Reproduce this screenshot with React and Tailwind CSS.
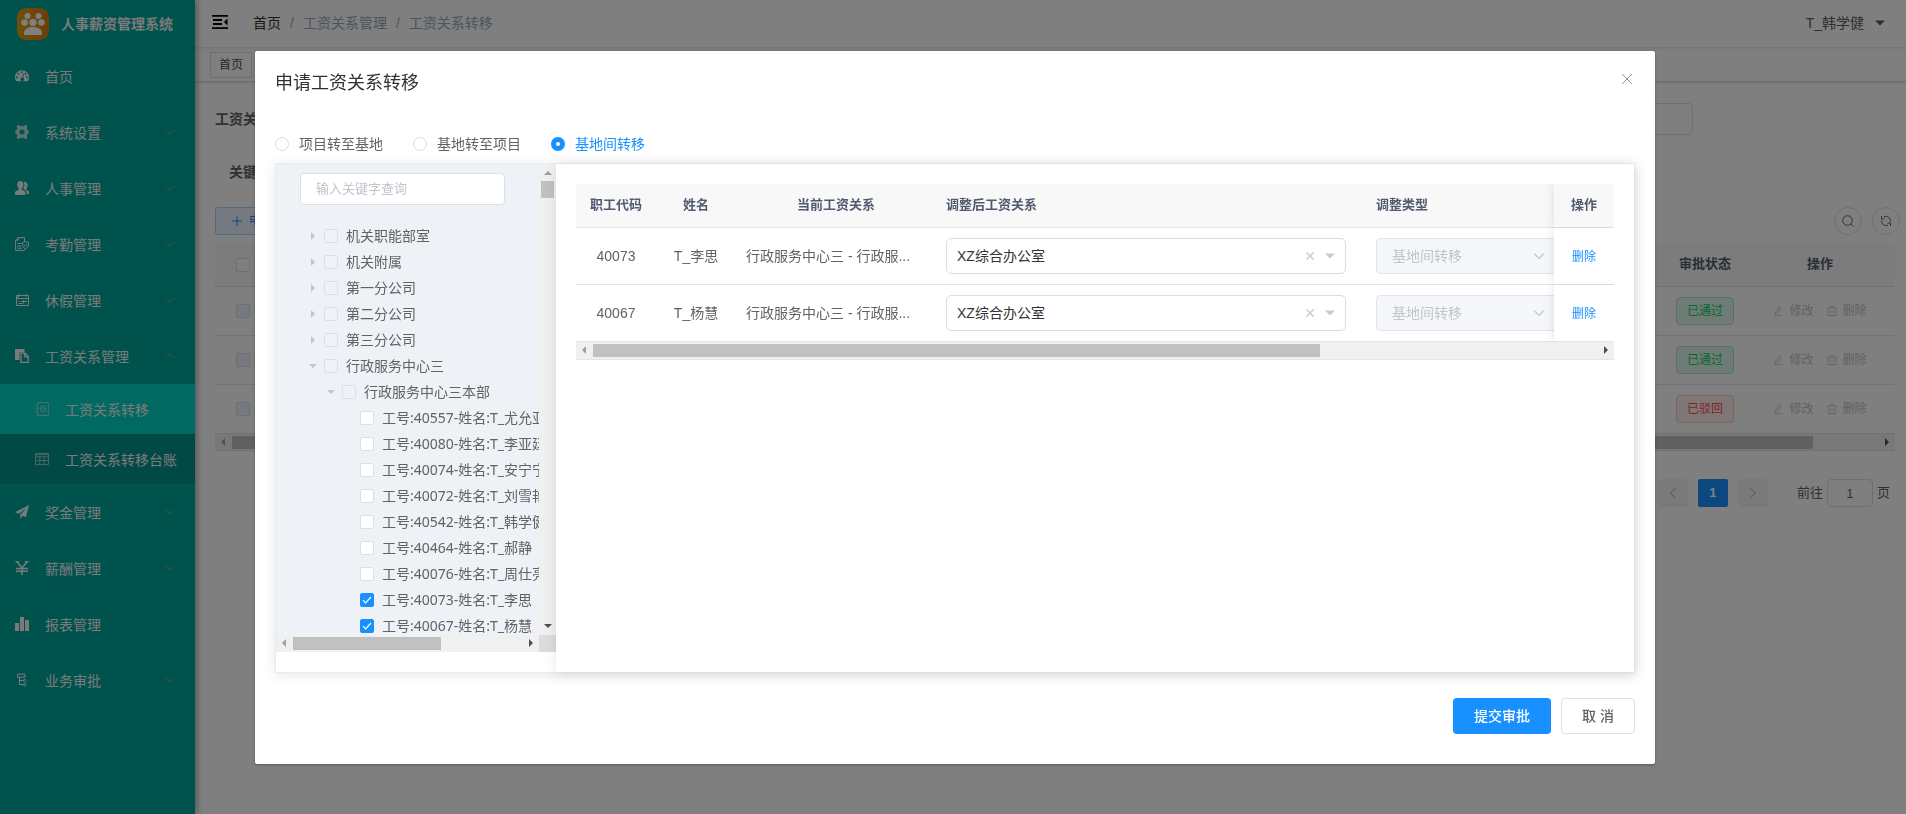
import { useState } from "react";

const MENU = [
  { label: "首页", icon: "dashboard" },
  { label: "系统设置", icon: "gear", arrow: "down" },
  { label: "人事管理", icon: "peoples", arrow: "down" },
  { label: "考勤管理", icon: "attendance", arrow: "down" },
  { label: "休假管理", icon: "calendar", arrow: "down" },
  {
    label: "工资关系管理",
    icon: "paste",
    arrow: "up",
    children: [
      { label: "工资关系转移", icon: "transfer", active: true },
      { label: "工资关系转移台账", icon: "grid" },
    ],
  },
  { label: "奖金管理", icon: "plane", arrow: "down" },
  { label: "薪酬管理", icon: "yen", arrow: "down" },
  { label: "报表管理", icon: "bars" },
  { label: "业务审批", icon: "flow", arrow: "down" },
];

const TREE = [
  { label: "机关职能部室", level: 0, open: false },
  { label: "机关附属", level: 0, open: false },
  { label: "第一分公司", level: 0, open: false },
  { label: "第二分公司", level: 0, open: false },
  { label: "第三分公司", level: 0, open: false },
  { label: "行政服务中心三", level: 0, open: true },
  { label: "行政服务中心三本部", level: 1, open: true },
  { label: "工号:40557-姓名:T_尤允亚", level: 2 },
  { label: "工号:40080-姓名:T_李亚廷", level: 2 },
  { label: "工号:40074-姓名:T_安宁宁", level: 2 },
  { label: "工号:40072-姓名:T_刘雪艳", level: 2 },
  { label: "工号:40542-姓名:T_韩学健", level: 2 },
  { label: "工号:40464-姓名:T_郝静", level: 2 },
  { label: "工号:40076-姓名:T_周仕亮", level: 2 },
  { label: "工号:40073-姓名:T_李思", level: 2, checked: true },
  { label: "工号:40067-姓名:T_杨慧", level: 2, checked: true },
];

const INDENT = ["pl-[30px]", "pl-[48px]", "pl-[66px]"];

const ROWS = [
  { code: "40073", name: "T_李思" },
  { code: "40067", name: "T_杨慧" },
];

const TYPES = ["项目转至基地", "基地转至项目", "基地间转移"];

function Svg({ className = "w-3.5 h-3.5", box = 14, children }) {
  return (
    <svg viewBox={`0 0 ${box} ${box}`} className={`shrink-0 ${className}`} fill="none" stroke="currentColor" aria-hidden="true">
      {children}
    </svg>
  );
}

function MenuIcon({ name }) {
  switch (name) {
    case "dashboard":
      return (
        <Svg>
          <path stroke="none" fill="currentColor" fillRule="evenodd" d="M7 1.2a7 7 0 0 0-7 7c0 1.5.4 2.8 1.1 4h11.800c.7-1.200 1.100-2.500 1.100-4a7 7 0 0 0-7-7zM7 2.200a1 1 0 1 1 0 2 1 1 0 0 1 0-2zM3.500 3.700a1 1 0 1 1 0 2 1 1 0 0 1 0-2zM10.600 3.700a1 1 0 1 1 0 2 1 1 0 0 1 0-2zM2 7.200a1 1 0 1 1 0 2 1 1 0 0 1 0-2zM12 7.200a1 1 0 1 1 0 2 1 1 0 0 1 0-2zM8.200 4.900l.8.200-.9 3.600a1.800 1.800 0 1 1-.8-.2z" />
        </Svg>
      );
    case "gear":
      return (
        <Svg className="w-3.5 h-3.5 opacity-75">
          <circle cx="7" cy="7" r="4.200" strokeWidth="3.400" />
          <g stroke="none" fill="currentColor">
            <circle cx="3.700" cy="2.100" r="2" />
            <circle cx="10.300" cy="2.100" r="2" />
            <circle cx="1.900" cy="7" r="1.900" />
            <circle cx="12.100" cy="7" r="1.900" />
            <circle cx="3.700" cy="11.900" r="2" />
            <circle cx="10.300" cy="11.900" r="2" />
          </g>
        </Svg>
      );
    case "peoples":
      return (
        <Svg>
          <g stroke="none" fill="currentColor">
            <path d="M5.300 0C3.300 0 2.200 1.500 2.200 3.600c0 1.500.6 3 1.600 3.800v1L.9 9.900C.3 10.300 0 10.900 0 11.600V14h10.400v-2.400c0-.7-.3-1.300-.9-1.600L6.700 8.500v-1C7.800 6.700 8.400 5.200 8.400 3.700 8.400 1.500 7.200 0 5.300 0z" />
            <path d="M8.600.9c.5.800.8 1.800.8 2.900 0 1.700-.6 3-1.300 3.900l2.300 1.300c.7.500 1.100 1.300 1.100 2.200V13H14v-1.700c0-.7-.4-1.200-.9-1.500l-1.600-1.200V7.500c.7-.7 1.100-1.800 1.100-2.900C12.600 2.300 11.200.6 8.600.9z" />
          </g>
        </Svg>
      );
    case "attendance":
      return (
        <Svg>
          <path d="M9.500 4.500V.6H3.200L.6 3.200v10.200h8.900v-1M3.200.6v2.600H.6M2.500 6.500h4M2.500 9h3.500M2.500 11.200h4.500" />
          <path d="M10.600 4.600l3 1v2.600c0 1.700-1.400 2.900-3 3.500-1.600-.6-3-1.800-3-3.500V5.600zM9.200 8l1.100 1.200 1.900-2.200" />
        </Svg>
      );
    case "calendar":
      return (
        <Svg>
          <path d="M1.500 2.500h12v10h-12zM1.500 5.500h12M4 .8v3M11 .8v3M6 8.500h6M3.500 8.500h1M3.500 10.500h4M8.500 7v3.500M3 2.500v3" />
        </Svg>
      );
    case "paste":
      return (
        <Svg>
          <path stroke="none" fill="currentColor" d="M0 0h9.500v3.200H4.500V11H0z" />
          <path d="M5.900 4.200h4.100l3.300 3.300v5.800H5.900zM9.600 4.200v3.700h3.700" strokeWidth="1.300" />
        </Svg>
      );
    case "transfer":
      return (
        <Svg>
          <path d="M2.500 3V.6h10.800v12.800H2.500V11M2.500 5v1.500M2.500 8v1M.5 4h3M.5 7h3M.5 10h3" />
          <circle cx="8" cy="7" r="2.800" />
          <path d="M8 5.500v1.700h1.500" />
        </Svg>
      );
    case "grid":
      return (
        <Svg>
          <path d="M.5 1.500h13v11H.5zM.5 4.800h13M.5 8.500h13M4.800 4.800v7.700M9.200 4.800v7.700" />
          <path d="M.5 2.700h13" />
        </Svg>
      );
    case "plane":
      return (
        <Svg>
          <path stroke="none" fill="currentColor" d="M14 0L0 7.300l3.900 1.500L11.600 3 5.300 9.700V14l2.200-3.200 3.400 1.400z" />
        </Svg>
      );
    case "yen":
      return (
        <Svg>
          <path strokeWidth="1.600" d="M.5.800h3.500M10 .800h3.500M2 .8L7 7 12 .8M7 6.500V14M1 7.500h12M1 10.200h12" />
        </Svg>
      );
    case "bars":
      return (
        <Svg>
          <path stroke="none" fill="currentColor" d="M0 6h4v8H0zM5 0h4v14H5zM10 3h4v11h-4z" />
        </Svg>
      );
    default:
      return (
        <Svg>
          <path d="M2.500 1.200h7.500v3H2.500zM4.500 4.200v7.300h4M4.500 7.500h4" />
          <circle cx="9.700" cy="7.500" r="1.200" />
          <circle cx="9.700" cy="11.700" r="1.200" />
        </Svg>
      );
  }
}

function Logo() {
  return (
    <svg viewBox="0 0 32 32" className="w-8 h-8 shrink-0" aria-hidden="true">
      <defs>
        <linearGradient id="logo" x1="0" x2="1" y1="0" y2="0">
          <stop offset="0" stopColor="#e0a010" />
          <stop offset="1" stopColor="#dd7a10" />
        </linearGradient>
      </defs>
      <rect width="32" height="32" rx="9" fill="url(#logo)" />
      <g fill="#fff">
        <circle cx="10.500" cy="8" r="3" />
        <circle cx="21.500" cy="8" r="3" />
        <circle cx="7.500" cy="14.500" r="3.200" />
        <circle cx="24.500" cy="14.500" r="3.200" />
        <circle cx="16" cy="14.500" r="4.200" stroke="#dd9010" />
        <path d="M7 26c0-5 3-7 9-7s9 2 9 7c0 .8-.5 1-1 1H8c-.5 0-1-.2-1-1z" />
      </g>
    </svg>
  );
}

function Chevron({ dir, className }) {
  const d = { down: "M1 3l4 4 4-4", up: "M1 7l4-4 4 4", left: "M7 1L3 5l4 4", right: "M3 1l4 4-4 4" }[dir];
  return (
    <Svg box={10} className={className}>
      <path d={d} />
    </Svg>
  );
}

function Triangle({ dir, className }) {
  const d = { up: "M0 6l4-4 4 4z", down: "M0 2l4 4 4-4z", left: "M6 0L2 4l4 4z", right: "M2 0l4 4-4 4z" }[dir];
  return (
    <svg viewBox="0 0 8 8" className={`w-2 h-2 shrink-0 fill-current ${className}`} aria-hidden="true">
      <path d={d} />
    </svg>
  );
}

function HScroll({ thumb, className = "" }) {
  return (
    <div className={`flex h-[17px] items-center bg-[#f0f0f0] ${className}`}>
      <Triangle dir="left" className="mr-[5px] ml-1 text-[#a0a0a0]" />
      <div className="flex-1">
        <div className={`h-[13px] bg-[#c1c1c1] ${thumb}`} />
      </div>
      <Triangle dir="right" className="mx-1 text-[#505050]" />
    </div>
  );
}

function Checkbox({ label, muted, checked = false }) {
  const [on, setOn] = useState(checked);
  return (
    <span className="grid shrink-0">
      <input
        type="checkbox"
        aria-label={label}
        checked={on}
        onChange={() => setOn(!on)}
        className={`peer col-start-1 row-start-1 h-3.5 w-3.5 appearance-none rounded-[2px] border border-[#dcdfe6] checked:border-[#1890ff] checked:bg-[#1890ff] ${muted ? "bg-[#edf2fc]" : "bg-white"}`}
      />
      <svg viewBox="0 0 14 14" className="pointer-events-none invisible col-start-1 row-start-1 h-3.5 w-3.5 peer-checked:visible" fill="none" stroke="#fff" aria-hidden="true">
        <path d="M3 7.200l2.600 2.600L11 4" strokeWidth="1.200" />
      </svg>
    </span>
  );
}

function Sidebar() {
  return (
    <aside className="z-10 w-[195px] shrink-0 bg-[#00a59b] text-[#f4f4f5] shadow-[2px_0_6px_rgba(0,21,41,0.35)]">
      <div className="flex h-12 items-center gap-3 pl-[17px]">
        <Logo />
        <h1 className="text-sm font-bold whitespace-nowrap">人事薪资管理系统</h1>
      </div>
      <nav>
        {MENU.map((item) => (
          <div key={item.label}>
            <a href="#" className="flex h-14 items-center gap-4 pr-5 pl-[15px]">
              <MenuIcon name={item.icon} />
              <span className="flex-1 pt-0.5">{item.label}</span>
              {item.arrow && <Chevron dir={item.arrow} className="w-2.5 h-2.5 text-[#8a9c9c]" />}
            </a>
            {item.children?.map((c) => (
              <a
                key={c.label}
                href="#"
                className={`flex h-[50px] items-center gap-4 pl-[35px] whitespace-nowrap ${c.active ? "bg-[#00d3c4]" : "bg-[#00928a]"}`}
              >
                <span className="opacity-60"><MenuIcon name={c.icon} /></span>
                <span className="pt-0.5">{c.label}</span>
              </a>
            ))}
          </div>
        ))}
      </nav>
    </aside>
  );
}

function Navbar() {
  return (
    <header>
      <div className="flex h-12 items-center border-b border-[#f0f1f3] pr-[22px] pl-[17px] shadow-[0_1px_4px_rgba(0,21,41,0.08)]">
        <button type="button" aria-label="菜单" className="mb-1">
          <Svg box={16} className="w-4 h-4 text-black">
            <path strokeWidth="1.800" d="M0 1.900h16M1 6h9M1 10h9M0 14.100h16" />
            <path stroke="none" fill="currentColor" d="M15.500 4.500v7L12 8z" />
          </Svg>
        </button>
        <nav className="ml-[25px] flex flex-1 gap-[9px] pb-0.5 text-[#97a8be]">
          <a href="#" className="text-[#303133]">首页</a>
          <span>/</span>
          <span>工资关系管理</span>
          <span>/</span>
          <span>工资关系转移</span>
        </nav>
        <button type="button" className="flex items-center gap-3 pb-0.5 text-[#5a5e66]">
          T_韩学健
          <Triangle dir="down" className="scale-125 text-[#5a5e66]" />
        </button>
      </div>
      <div className="flex h-[34px] items-center border-b border-[#d8dce5] pl-[15px] shadow-[0_1px_3px_rgba(0,0,0,0.12)]">
        <a href="#" className="border border-[#d8dce5] px-2 text-xs leading-6 text-[#495060]">首页</a>
      </div>
    </header>
  );
}

const STATUS = [
  { text: "已通过", cls: "border-[#a8e6c3] bg-[#dff7ea] text-[#13ce66]" },
  { text: "已通过", cls: "border-[#a8e6c3] bg-[#dff7ea] text-[#13ce66]" },
  { text: "已驳回", cls: "border-[#ffc4c4] bg-[#ffecec] text-[#ff4949]" },
];

function RowAction({ kind, label }) {
  return (
    <button type="button" className="flex items-center gap-1.5 text-xs text-[#c0c4cc]">
      <Svg box={12} className="w-2.5 h-3">
        {kind === "edit" ? (
          <path d="M3 7.500L7.500 1l2 1.500L5 9l-2.500 1zM1 11.500h10" />
        ) : (
          <path d="M0 2.500h12M4 2.500v-2h4v2M1.500 2.500v9h9v-9M4.500 5v4M7.500 5v4" />
        )}
      </Svg>
      {label}
    </button>
  );
}

function ListPage() {
  return (
    <main className="pt-[21px] pr-1.5 pl-5">
      <div className="flex h-8 items-center">
        <label htmlFor="relation" className="font-bold text-[#606266]">工资关系</label>
        <input id="relation" className="mr-[207px] ml-auto h-8 w-[400px] rounded border border-[#dcdfe6]" />
      </div>
      <div className="mt-[21px] flex h-8 items-center pl-3.5 font-bold text-[#606266]">关键字</div>
      <div className="mt-[19px] flex items-center gap-2.5">
        <button type="button" className="mr-auto flex h-7 items-center gap-[7px] rounded-[3px] border border-[#a3d3ff] bg-[#e8f4ff] px-4 text-xs text-[#1890ff]">
          <Svg box={10} className="w-2.5 h-2.5">
            <path d="M0 5h10M5 0v10" />
          </Svg>
          申请
        </button>
        <button type="button" aria-label="搜索" className="flex h-7 w-7 items-center justify-center rounded-full border border-[#dcdfe6] text-[#606266]">
          <Svg box={12} className="w-3 h-3">
            <circle cx="5.500" cy="5.500" r="4.800" />
            <path d="M9 9l2.500 2.500" />
          </Svg>
        </button>
        <button type="button" aria-label="刷新" className="flex h-7 w-7 items-center justify-center rounded-full border border-[#dcdfe6] text-[#606266]">
          <Svg box={12} className="w-3 h-3">
            <path d="M4 1.800a4.600 4.600 0 0 1 6.500 4.700M1.500 5.500A4.600 4.600 0 0 0 8 10.200M1.500 1v3h3M10.500 11V8h-3" />
          </Svg>
        </button>
      </div>
      <div className="mt-2 mr-[5px]">
        <table className="w-full table-fixed border-separate border-spacing-0">
          <colgroup>
            <col className="w-14" />
            <col />
            <col className="w-20" />
            <col className="w-[150px]" />
          </colgroup>
          <thead>
            <tr className="h-11 bg-[#f8f8f9] text-[13px] text-[#515a6e]">
              <th className="border-b border-[#dfe6ec] pl-[21px]"><Checkbox label="全选" /></th>
              <th className="border-b border-[#dfe6ec]" />
              <th className="border-b border-[#dfe6ec]">审批状态</th>
              <th className="border-b border-[#dfe6ec]">操作</th>
            </tr>
          </thead>
          <tbody>
            {STATUS.map((s, i) => (
              <tr key={i} className="h-[49px]">
                <td className="border-b border-[#dfe6ec] pl-[21px]"><Checkbox label="选择" muted /></td>
                <td className="border-b border-[#dfe6ec]" />
                <td className="border-b border-[#dfe6ec] text-center">
                  <span className={`inline-block rounded border px-[10px] text-xs leading-[26px] ${s.cls}`}>{s.text}</span>
                </td>
                <td className="border-b border-[#dfe6ec]">
                  <div className="flex justify-center gap-[13px]">
                    <RowAction kind="edit" label="修改" />
                    <RowAction kind="delete" label="删除" />
                  </div>
                </td>
              </tr>
            ))}
          </tbody>
        </table>
        <HScroll thumb="w-[96%]" className="border-b border-[#dfe6ec]" />
      </div>
      <div className="mt-7 flex items-center justify-end gap-2.5 pr-2.5 text-[13px] text-[#606266]">
        <button type="button" aria-label="上一页" className="flex h-7 w-[30px] items-center justify-center rounded-[2px] bg-[#f4f4f5] text-[#c0c4cc]">
          <Chevron dir="left" className="w-3 h-3" />
        </button>
        <button type="button" className="h-7 w-[30px] rounded-[2px] bg-[#1890ff] font-bold text-white">1</button>
        <button type="button" aria-label="下一页" className="flex h-7 w-[30px] items-center justify-center rounded-[2px] bg-[#f4f4f5] text-[#c0c4cc]">
          <Chevron dir="right" className="w-3 h-3" />
        </button>
        <label className="ml-[19px] flex items-center gap-1">
          前往
          <input defaultValue="1" className="h-7 w-[46px] rounded border border-[#dcdfe6] text-center" />
          页
        </label>
      </div>
    </main>
  );
}

function TreePane() {
  return (
    <div className="w-[280px] shrink-0">
      <div className="flex h-[471px] bg-[#eef1f6]">
        <div className="w-[263px] overflow-hidden">
          <input
            aria-label="输入关键字查询"
            placeholder="输入关键字查询"
            className="mt-[9px] ml-6 h-8 w-[205px] rounded border border-[#dcdfe6] bg-white px-[15px] text-[13px] placeholder:text-[#c0c4cc]"
          />
          <ul className="mt-[18px] font-['Noto_Sans','Noto_Sans_CJK_SC',sans-serif]">
            {TREE.map((n) => (
              <li key={n.label} className={`flex h-[26px] items-center whitespace-nowrap ${INDENT[n.level]}`}>
                <span className="flex w-[18px] shrink-0 pl-[3px]">
                  {n.open !== undefined && <Triangle dir={n.open ? "down" : "right"} className="text-[#c0c4cc]" />}
                </span>
                <Checkbox label={n.label} muted={n.level < 2} checked={n.checked} />
                <span className="ml-2">{n.label}</span>
              </li>
            ))}
          </ul>
        </div>
        <div className="flex w-[17px] flex-col items-center bg-[#f0f0f0] py-[5px]">
          <Triangle dir="up" className="text-[#a0a0a0]" />
          <div className="mt-1 h-[17px] w-[13px] bg-[#c1c1c1]" />
          <Triangle dir="down" className="mt-auto text-[#505050]" />
        </div>
      </div>
      <div className="flex bg-[#dcdcdc]">
        <HScroll thumb="w-[148px]" className="w-[263px]" />
      </div>
    </div>
  );
}

const TH = "border-b border-[#dfe6ec] bg-[#f8f8f9] px-2.5";
const TD = "border-b border-[#dfe6ec] px-2.5";
const STICKY = "sticky right-0 text-center shadow-[0_0_10px_rgba(0,0,0,0.12)] [clip-path:inset(0_0_0_-12px)]";

function TransferTable() {
  return (
    <div>
      <div className="overflow-hidden">
        <table className="w-[1430px] table-fixed border-separate border-spacing-0">
          <colgroup>
            <col className="w-20" />
            <col className="w-20" />
            <col className="w-[200px]" />
            <col className="w-[430px]" />
            <col className="w-[210px]" />
            <col />
            <col className="w-[60px]" />
          </colgroup>
          <thead>
            <tr className="h-11 text-[13px] text-[#515a6e]">
              <th className={TH}>职工代码</th>
              <th className={TH}>姓名</th>
              <th className={TH}>当前工资关系</th>
              <th className={`${TH} text-left`}>调整后工资关系</th>
              <th className={`${TH} text-left`}>调整类型</th>
              <th className={TH} />
              <th className={`${TH} ${STICKY}`}>操作</th>
            </tr>
          </thead>
          <tbody>
            {ROWS.map((r) => (
              <tr key={r.code} className="h-[57px]">
                <td className={`${TD} text-center`}>{r.code}</td>
                <td className={`${TD} text-center`}>{r.name}</td>
                <td className={`${TD} whitespace-nowrap`}>行政服务中心三 - 行政服...</td>
                <td className={TD}>
                  <div className="relative w-[400px]">
                    <select aria-label="调整后工资关系" className="block h-9 w-full appearance-none rounded-[5px] border border-[#ddd] bg-white px-2.5 text-[#333]">
                      <option>XZ综合办公室</option>
                    </select>
                    <div className="absolute inset-y-0 right-3 flex items-center gap-3 text-[#ccc]">
                      <button type="button" aria-label="清除">
                        <Svg box={8} className="w-2 h-2">
                          <path d="M.5.5l7 7M7.500.5l-7 7" strokeWidth="1.500" />
                        </Svg>
                      </button>
                      <Triangle dir="down" className="scale-125" />
                    </div>
                  </div>
                </td>
                <td className={TD}>
                  <div className="relative w-[181px]">
                    <select disabled aria-label="调整类型" className="block h-9 w-full appearance-none rounded border border-[#dfe4ed] bg-[#f5f7fa] px-[15px] text-[#c0c4cc] opacity-100">
                      <option>基地间转移</option>
                    </select>
                    <Chevron dir="down" className="pointer-events-none absolute top-3 right-3 h-3 w-3 text-[#c0c4cc]" />
                  </div>
                </td>
                <td className={TD} />
                <td className={`${TD} ${STICKY} bg-white`}>
                  <button type="button" className="text-xs text-[#1890ff]">删除</button>
                </td>
              </tr>
            ))}
          </tbody>
        </table>
      </div>
      <HScroll thumb="w-[727px]" className="h-[18px] border-b border-[#dfe6ec]" />
    </div>
  );
}

function TransferDialog() {
  const [type, setType] = useState("基地间转移");
  return (
    <div className="fixed inset-0 z-20 flex items-center justify-center bg-black/50 pl-1">
      <div role="dialog" aria-labelledby="dialog-title" className="w-[1400px] max-w-full rounded-[2px] bg-white px-5 pt-5 pb-[30px] shadow-[0_1px_3px_rgba(0,0,0,0.3)]">
        <div className="flex items-start justify-between">
          <h2 id="dialog-title" className="text-lg leading-6 text-[#303133]">申请工资关系转移</h2>
          <button type="button" aria-label="关闭" className="mt-0.5 mr-0.5 text-[#909399]">
            <Svg box={12} className="h-3 w-3">
              <path d="M1 1l10 10M11 1L1 11" />
            </Svg>
          </button>
        </div>
        <div className="mt-10 flex h-[18px] items-center gap-[30px]">
          {TYPES.map((t) => (
            <label key={t} className={`flex items-center gap-2.5 ${type === t ? "text-[#1890ff]" : "text-[#606266]"}`}>
              <input
                type="radio"
                name="transfer-type"
                checked={type === t}
                onChange={() => setType(t)}
                className="h-3.5 w-3.5 appearance-none rounded-full border border-[#dcdfe6] bg-white checked:border-5 checked:border-[#1890ff]"
              />
              {t}
            </label>
          ))}
        </div>
        <div className="mt-2.5 flex border border-[#e6ebf5] shadow-[0_2px_12px_rgba(0,0,0,0.1)]">
          <div className="pb-5">
            <TreePane />
          </div>
          <div className="min-w-0 flex-1 bg-white p-5 shadow-[0_2px_12px_rgba(0,0,0,0.1)]">
            <TransferTable />
          </div>
        </div>
        <div className="mt-[25px] flex justify-end gap-2.5">
          <button type="button" className="h-9 w-[98px] rounded bg-[#1890ff] font-medium text-white">提交审批</button>
          <button type="button" className="h-9 w-[74px] rounded border border-[#dcdfe6] bg-white font-medium">取 消</button>
        </div>
      </div>
    </div>
  );
}

export default function App() {
  return (
    <div className="flex min-h-screen overflow-hidden bg-white font-['Liberation_Sans','Noto_Sans_CJK_SC',sans-serif] text-sm text-[#606266]">
      <Sidebar />
      <div className="min-w-0 flex-1">
        <Navbar />
        <ListPage />
      </div>
      <TransferDialog />
    </div>
  );
}
